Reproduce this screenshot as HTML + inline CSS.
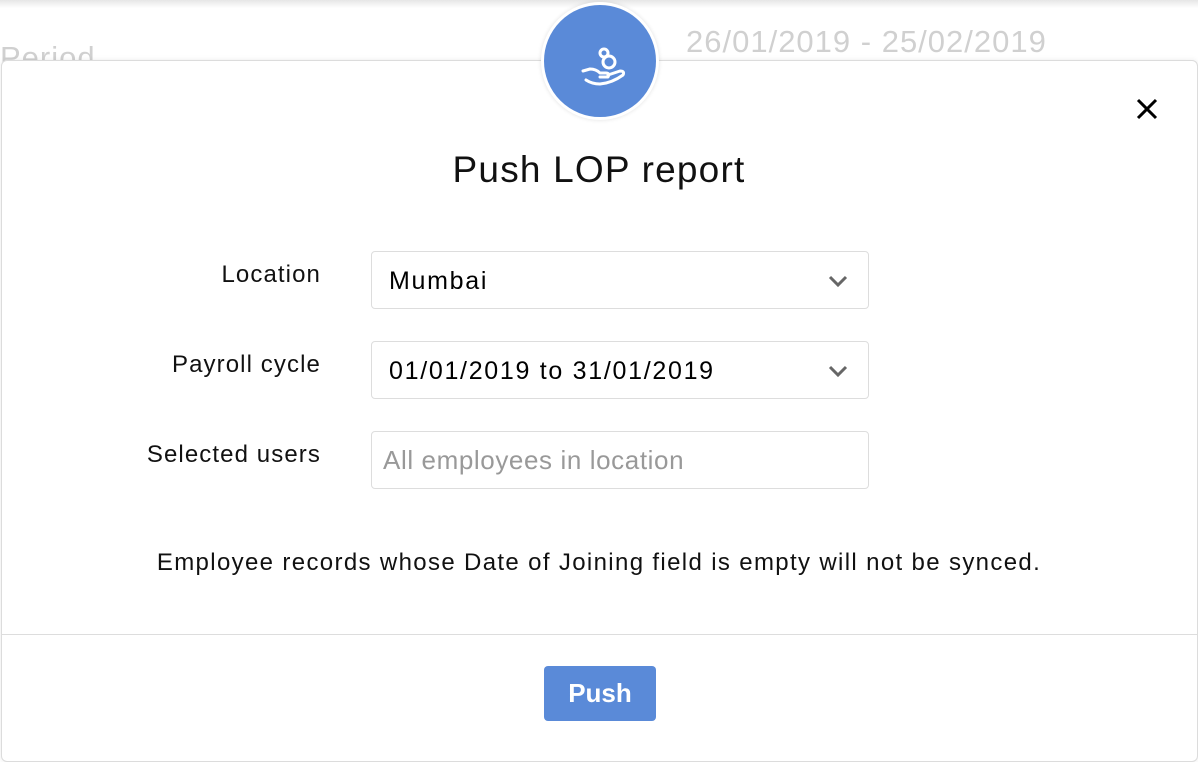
<!DOCTYPE html>
<html><head><style>
body{margin:0;width:1198px;height:752px;overflow:hidden;background:#fff;font-family:"Liberation Sans",sans-serif;position:relative}
.top{position:absolute;left:0;top:0;width:1198px;height:8px;background:linear-gradient(#e6e6e6,#fff)}
.bgt{position:absolute;color:#d0d0d0;font-size:31px;letter-spacing:1px}
.modal{position:absolute;left:1px;top:60px;width:1195px;height:700px;background:#fff;border:1px solid #dcdcdc;border-radius:6px;box-shadow:0 0 6px rgba(0,0,0,.08)}
.circ{position:absolute;left:541px;top:2px;width:112px;height:112px;border-radius:50%;background:#5a8ad8;border:3px solid #fff;box-shadow:0 0 4px rgba(0,0,0,.12)}
.title{position:absolute;left:0;width:1198px;top:149px;text-align:center;font-size:37px;letter-spacing:1.2px;color:#111}
.lbl{position:absolute;right:877px;font-size:24px;letter-spacing:1.1px;color:#111}
.box{position:absolute;left:371px;width:498px;height:58px;border:1px solid #ddd;border-radius:4px;font-size:25px;letter-spacing:1.7px;box-sizing:border-box}
.box span{position:absolute;left:17px;top:15px}
.chev{position:absolute;right:20px;top:22px}
.note{position:absolute;left:0;width:1198px;top:549px;text-align:center;font-size:24px;letter-spacing:1.35px;color:#111}
.div{position:absolute;left:1px;width:1196px;top:634px;height:1px;background:#ddd}
.btn{position:absolute;left:544px;top:666px;width:112px;height:55px;background:#5a8ad8;border-radius:4px;color:#fff;font-size:26px;font-weight:bold;text-align:center;line-height:55px}
</style></head><body>
<div class="top"></div>
<div class="bgt" style="left:0;top:40px">Period</div>
<div class="bgt" style="left:686px;top:24px">26/01/2019 - 25/02/2019</div>
<div class="modal"></div>
<div class="circ"><svg width="112" height="112" viewBox="0 0 112 112" fill="none" stroke="#fff" stroke-width="3" stroke-linecap="round" stroke-linejoin="round">
<circle cx="65" cy="57" r="6"/><circle cx="60" cy="48" r="4"/>
<path d="M39 66 L46 64 Q52 64 56 68 L62 68 Q66 68 64 72 L56 72"/>
<path d="M64 70 L76 66 Q81 66 79 70 Q68 78 56 79 Q48 79 42 75"/>
</svg></div>
<svg style="position:absolute;left:1136px;top:98px" width="22" height="22" stroke="#000" stroke-width="3"><path d="M2 2L20 20M20 2L2 20"/></svg>
<div class="title">Push LOP report</div>
<div class="lbl" style="top:261px">Location</div>
<div class="lbl" style="top:351px">Payroll cycle</div>
<div class="lbl" style="top:441px">Selected users</div>
<div class="box" style="top:251px"><span>Mumbai</span><svg class="chev" width="20" height="14" stroke="#666" stroke-width="3" fill="none"><path d="M2 3L10 11L18 3"/></svg></div>
<div class="box" style="top:341px"><span>01/01/2019 to 31/01/2019</span><svg class="chev" width="20" height="14" stroke="#666" stroke-width="3" fill="none"><path d="M2 3L10 11L18 3"/></svg></div>
<div class="box" style="top:431px;color:#999;font-size:26px;letter-spacing:0.6px"><span style="left:11px;top:13px">All employees in location</span></div>
<div class="note">Employee records whose Date of Joining field is empty will not be synced.</div>
<div class="div"></div>
<div class="btn">Push</div>
</body></html>
